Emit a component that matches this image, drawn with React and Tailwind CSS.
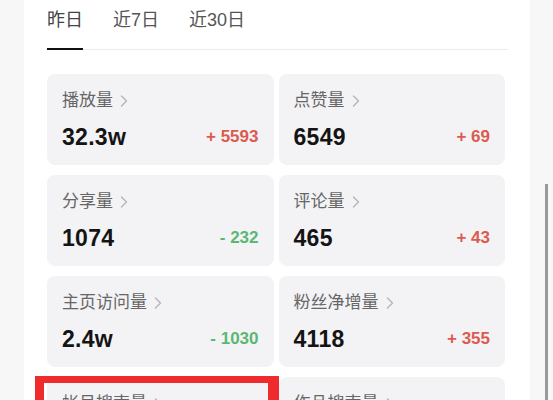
const TABS = ['昨日', '近7日', '近30日']

const STATS = [
  { label: '播放量', value: '32.3w', delta: '+ 5593', up: true },
  { label: '点赞量', value: '6549', delta: '+ 69', up: true },
  { label: '分享量', value: '1074', delta: '- 232', up: false },
  { label: '评论量', value: '465', delta: '+ 43', up: true },
  { label: '主页访问量', value: '2.4w', delta: '- 1030', up: false },
  { label: '粉丝净增量', value: '4118', delta: '+ 355', up: true },
  { label: '帐号搜索量', value: '1290', delta: '+ 88', up: true },
  { label: '作品搜索量', value: '3021', delta: '+ 120', up: true },
]

function Chevron() {
  return (
    <svg width="10" height="14" viewBox="0 0 10 14" fill="none" className="ml-[6px]">
      <path d="M2.5 2l5 5-5 5" stroke="#b5b5b8" strokeWidth="1.4" strokeLinecap="round" strokeLinejoin="round" />
    </svg>
  )
}

function StatCard({ stat }) {
  return (
    <div className="rounded-[8px] bg-[#f3f3f6] pl-[15px] pr-[15px] pt-[15px] pb-[14px]">
      <div className="flex items-center h-[24px] text-[17px] text-[#666]">
        {stat.label}
        <Chevron />
      </div>
      <div className="flex items-center justify-between h-[28px] mt-[10px]">
        <span className="text-[23px] font-bold text-[#141414] tracking-[0.3px]">{stat.value}</span>
        <span
          className={
            stat.up
              ? 'text-[17px] font-semibold text-[#dd5a4f]'
              : 'text-[17px] font-semibold text-[#5ab874]'
          }
        >
          {stat.delta}
        </span>
      </div>
    </div>
  )
}

export default function App() {
  return (
    <div
      className="flex h-[400px] overflow-hidden bg-[#f7f7f7]"
      style={{ fontFamily: '"Liberation Sans", "Noto Sans CJK SC", sans-serif' }}
    >
      <div className="w-[24px] shrink-0" />

      {/* panel */}
      <div className="relative w-[506px] shrink-0 bg-white pl-[23px] pr-[25px]">
        <div className="flex gap-[30px] h-[50px] border-b border-[#ececec] mr-[-3px]">
          {TABS.map((t, i) => (
            <div
              key={t}
              className={
                i === 0
                  ? 'flex items-start pt-[8px] text-[18px] text-[#444] border-b-2 border-[#111] -mb-px'
                  : 'flex items-start pt-[8px] text-[18px] text-[#555]'
              }
            >
              <span className="leading-[24px]">{t}</span>
            </div>
          ))}
        </div>

        <div className="grid grid-cols-2 gap-x-[5px] gap-y-[10px] mt-[24px]">
          {STATS.map((s) => (
            <StatCard key={s.label} stat={s} />
          ))}
        </div>

        {/* annotation box */}
        <div className="absolute left-[11px] top-[376px] w-[244px] h-[60px] border-l-[9px] border-t-[7px] border-r-[11px] border-[#ef2b2d]" />
      </div>

      {/* scroll track */}
      <div className="flex-1 pl-[15px] pt-[184px]">
        <div className="w-[3px] h-full bg-[#9a9a9a]" />
      </div>
    </div>
  )
}
